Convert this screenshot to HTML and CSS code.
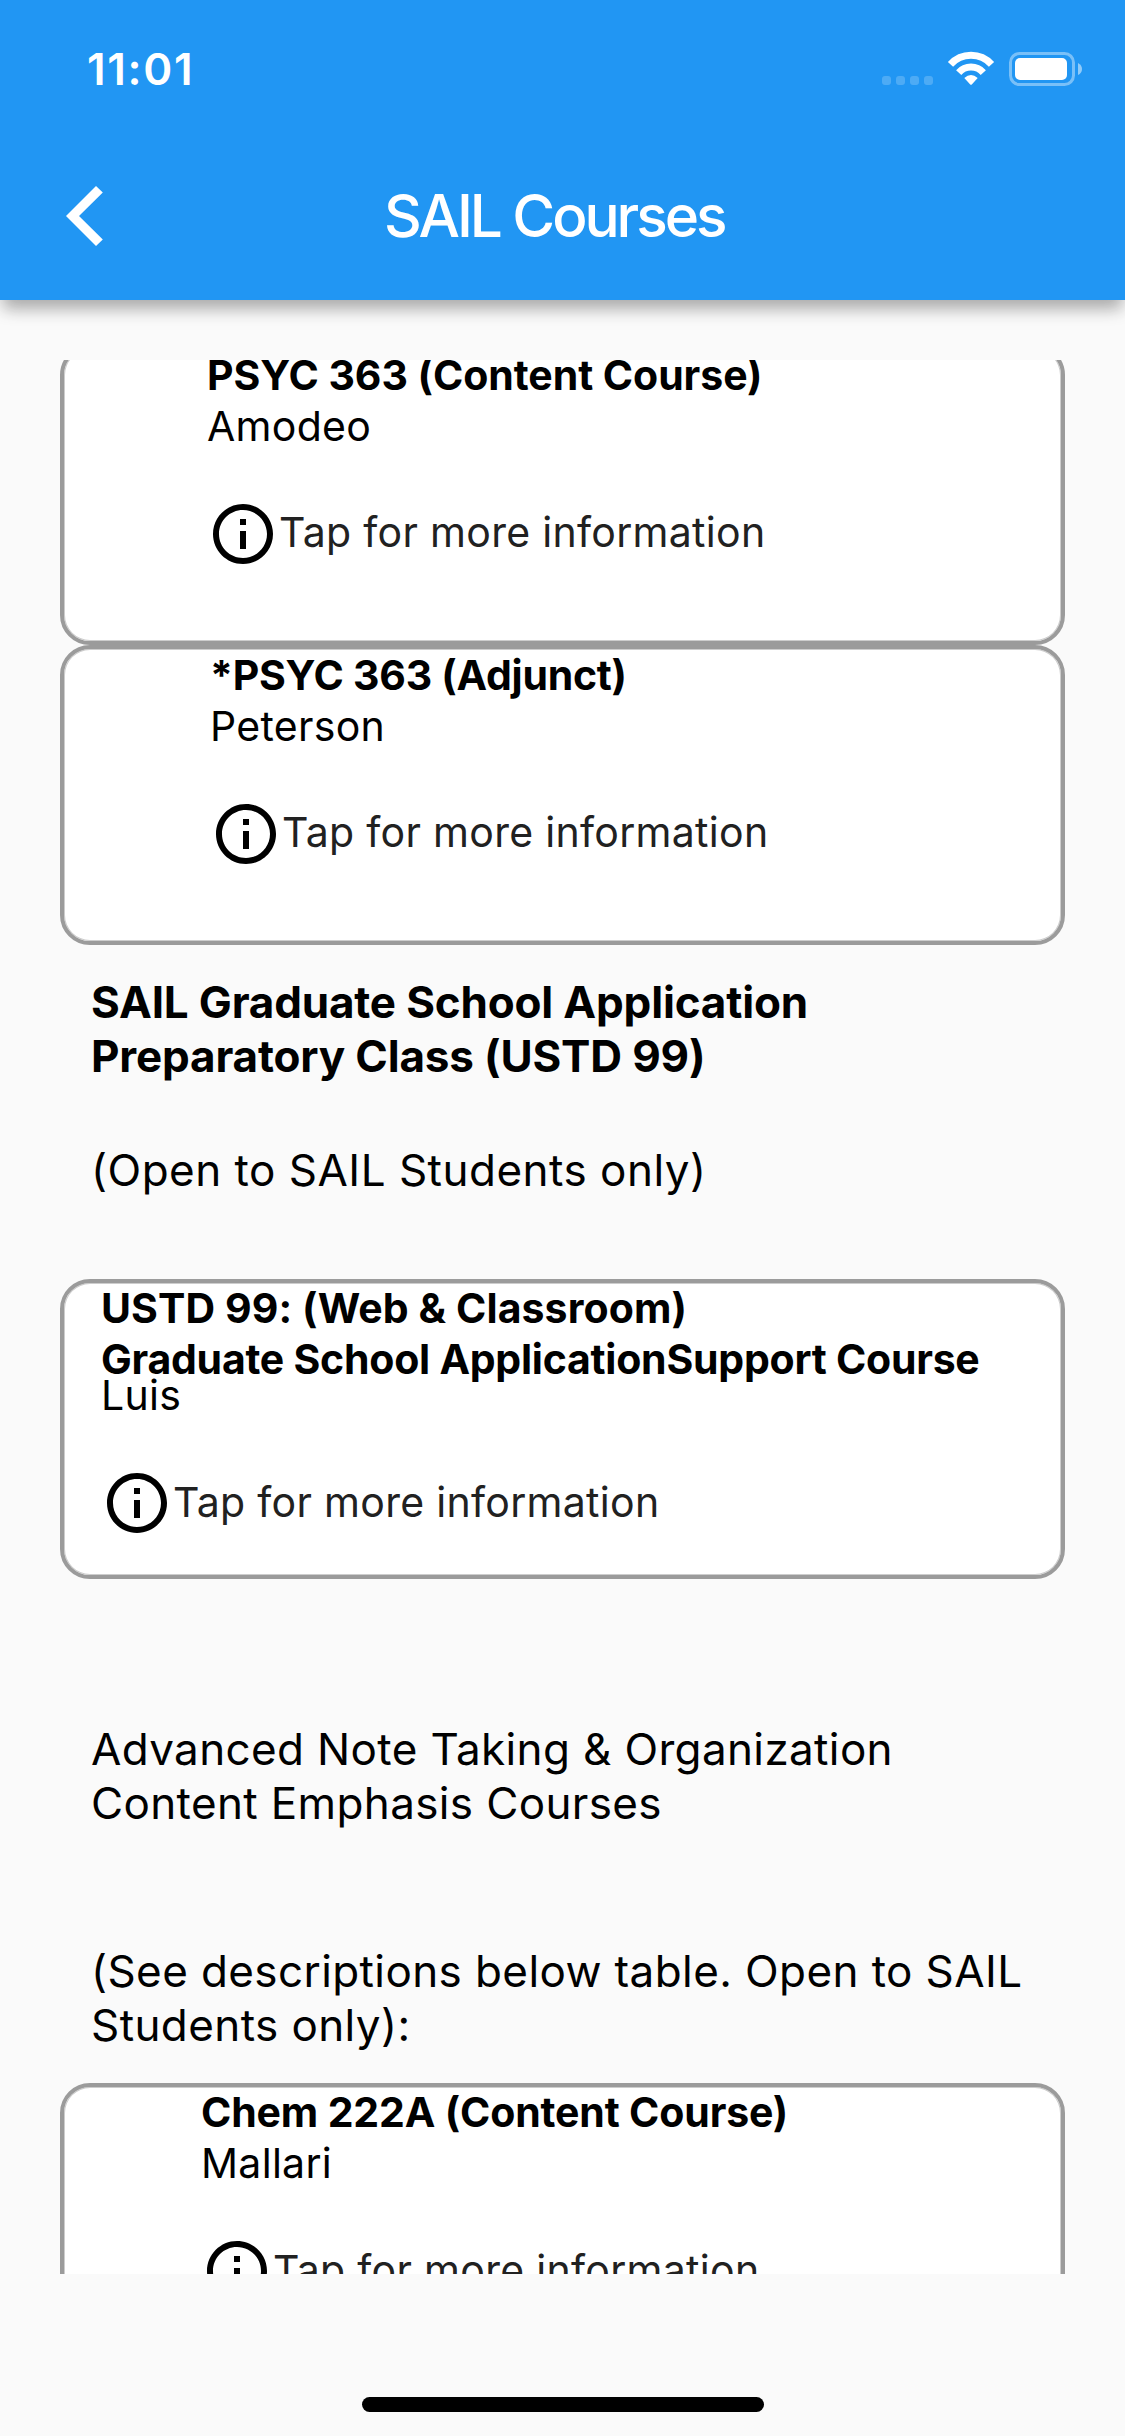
FILE: index.html
```html
<!DOCTYPE html>
<html lang="en">
<head>
<meta charset="utf-8">
<title>SAIL Courses</title>
<link rel="stylesheet" href="styles.css">
</head>
<body>
<svg class="sprite" aria-hidden="true">
  <symbol id="info" viewBox="0 0 24 24">
    <path d="M11 7h2v2h-2zm0 4h2v6h-2zm1-9C6.48 2 2 6.48 2 12s4.480 10 10 10 10-4.480 10-10S17.520 2 12 2zm0 18c-4.410 0-8-3.590-8-8s3.590-8 8-8 8 3.590 8 8-3.590 8-8 8z"/>
  </symbol>
</svg>
<div class="screen">
  <header class="app-header">
    <div class="status-bar">
      <span class="clock">11:01</span>
      <svg class="status-icons" viewBox="0 0 200 36">
        <g fill="#fff" fill-opacity=".2">
          <rect x="0" y="26" width="9" height="9" rx="3"/>
          <rect x="14" y="26" width="9" height="9" rx="3"/>
          <rect x="28" y="26" width="9" height="9" rx="3"/>
          <rect x="42" y="26" width="9" height="9" rx="3"/>
        </g>
        <g fill="none" stroke="#fff" stroke-width="7">
          <path d="M68.500 14.400A27.600 27.600 0 0 1 109.500 14.400"/>
          <path d="M76.700 22.600A16.500 16.500 0 0 1 101.300 22.600"/>
        </g>
        <path fill="#fff" d="M82.300 28Q89 22.200 95.700 28L90 34.200Q89 35.400 88 34.200Z"/>
        <rect x="128.500" y="3.500" width="63" height="31" rx="9" fill="none" stroke="#fff" stroke-opacity=".4" stroke-width="3"/>
        <rect x="133" y="8" width="52" height="22" rx="5" fill="#fff"/>
        <path fill="#fff" fill-opacity=".5" d="M196 13Q200 15 200 19T196 25Z"/>
      </svg>
    </div>
    <div class="nav-bar">
      <svg class="back" viewBox="0 0 40 60"><path fill="#fff" d="M30 0L0 30L30 60L36.800 53.500L13 30L36.800 6.500Z"/></svg>
      <h1 class="page-title">SAIL Courses</h1>
    </div>
  </header>
  <main class="course-list">
    <article class="card card-psyc">
      <h2 class="course">PSYC 363 (Content Course)</h2>
      <p class="teacher">Amodeo</p>
      <div class="more"><svg class="info"><use href="#info"/></svg><span class="more-text">Tap for more information</span></div>
    </article>
    <article class="card card-adjunct">
      <h2 class="course">*PSYC 363 (Adjunct)</h2>
      <p class="teacher">Peterson</p>
      <div class="more"><svg class="info"><use href="#info"/></svg><span class="more-text">Tap for more information</span></div>
    </article>
    <h2 class="section section-heading">SAIL Graduate School Application<br>Preparatory Class (USTD 99)</h2>
    <p class="section section-open">(Open to SAIL Students only)</p>
    <article class="card card-ustd">
      <h2 class="course"><span class="course-code">USTD 99: (Web &amp; Classroom)</span><br><span class="course-name">Graduate School ApplicationSupport Course</span></h2>
      <p class="teacher">Luis</p>
      <div class="more"><svg class="info"><use href="#info"/></svg><span class="more-text">Tap for more information</span></div>
    </article>
    <p class="section section-advanced">Advanced Note Taking &amp; Organization<br>Content Emphasis Courses</p>
    <p class="section section-see">(See descriptions below table. Open to SAIL<br>Students only):</p>
    <article class="card card-chem">
      <h2 class="course">Chem 222A (Content Course)</h2>
      <p class="teacher">Mallari</p>
      <div class="more"><svg class="info"><use href="#info"/></svg><span class="more-text">Tap for more information</span></div>
    </article>
  </main>
  <footer class="home-area"><div class="home-indicator"></div></footer>
</div>
</body>
</html>
```
FILE: styles.css
```css
* { box-sizing: border-box; }

body {
  margin: 0;
  background: #fafafa;
  color: #000;
  font-family: Inter, "Liberation Sans", sans-serif;
}

h1, h2, p { margin: 0; }

.sprite { display: none; }

.screen {
  display: flex;
  flex-direction: column;
  width: 1125px;
  height: 2436px;
  overflow: hidden;
}

/* Header */
.app-header {
  flex: none;
  height: 300px;
  background: #2196f3;
  color: #fff;
  box-shadow: 0 12px 15px -3px rgba(0, 0, 0, .29), 0 3px 24px rgba(0, 0, 0, .06);
}

.status-bar {
  display: flex;
  justify-content: space-between;
  height: 132px;
  padding: 42px 43px 0 87px;
}

.clock {
  font-size: 44px;
  font-weight: 600;
  line-height: 54px;
  letter-spacing: 1.7px;
}

.status-icons { width: 200px; height: 36px; margin-top: 8px; }

.nav-bar {
  display: flex;
  align-items: center;
  height: 168px;
  padding-left: 66px;
}

.back { width: 40px; height: 60px; }

.page-title {
  margin-left: 278px;
  font-size: 58.5px;
  font-weight: 500;
  line-height: 70px;
  letter-spacing: -3.05px;
  white-space: nowrap;
}

/* Scrolling list */
.course-list {
  flex: none;
  display: flex;
  flex-direction: column;
  height: 1914px;
  margin-top: 60px;
  padding: 0 60px;
  overflow: hidden;
}

.card {
  flex: none;
  height: 300px;
  padding-top: .5px;
  border: 4px solid #9b9b9b;
  border-radius: 30px;
  background: #fff;
  box-shadow: inset 0 0 0 1px #cdcdcd;
}

.card-psyc { margin-top: -15px; padding-left: 143px; }
.card-adjunct { padding-left: 146px; }
.card-ustd { margin-top: 82px; padding-left: 37px; }
.card-chem { margin-top: 31px; padding-left: 137px; }
.card-ustd, .card-chem { padding-top: 0; }

.course, .teacher, .more-text {
  font-size: 41px;
  line-height: 51px;
  white-space: nowrap;
}

.course { font-weight: 650; letter-spacing: -.05px; }
.card-adjunct .course { letter-spacing: -.25px; }
.card-chem .course { letter-spacing: -.15px; }
.card-ustd .course-code { letter-spacing: .1px; }
.card-ustd .course-name { letter-spacing: -.24px; }

.teacher { letter-spacing: .3px; }
.card-ustd .teacher { margin-top: -15px; }

.more { display: flex; align-items: center; height: 72px; margin-top: 46px; }
.info { width: 72px; height: 72px; }
.more-text { margin-bottom: 2px; color: #212121; letter-spacing: .3px; }

/* Text between cards */
.section {
  flex: none;
  padding-left: 31px;
  font-size: 44px;
  line-height: 54px;
  letter-spacing: .4px;
  white-space: nowrap;
}

.section-heading { margin-top: 30px; font-weight: 650; letter-spacing: -.17px; }
.section-open { margin-top: 60px; letter-spacing: .49px; }
.section-advanced { margin-top: 143px; letter-spacing: .36px; }
.section-see { margin-top: 114px; }

/* Home indicator */
.home-area { display: flex; justify-content: center; padding: 123px 0 0 1px; }
.home-indicator { width: 402px; height: 15px; border-radius: 8px; background: #000; }
```
